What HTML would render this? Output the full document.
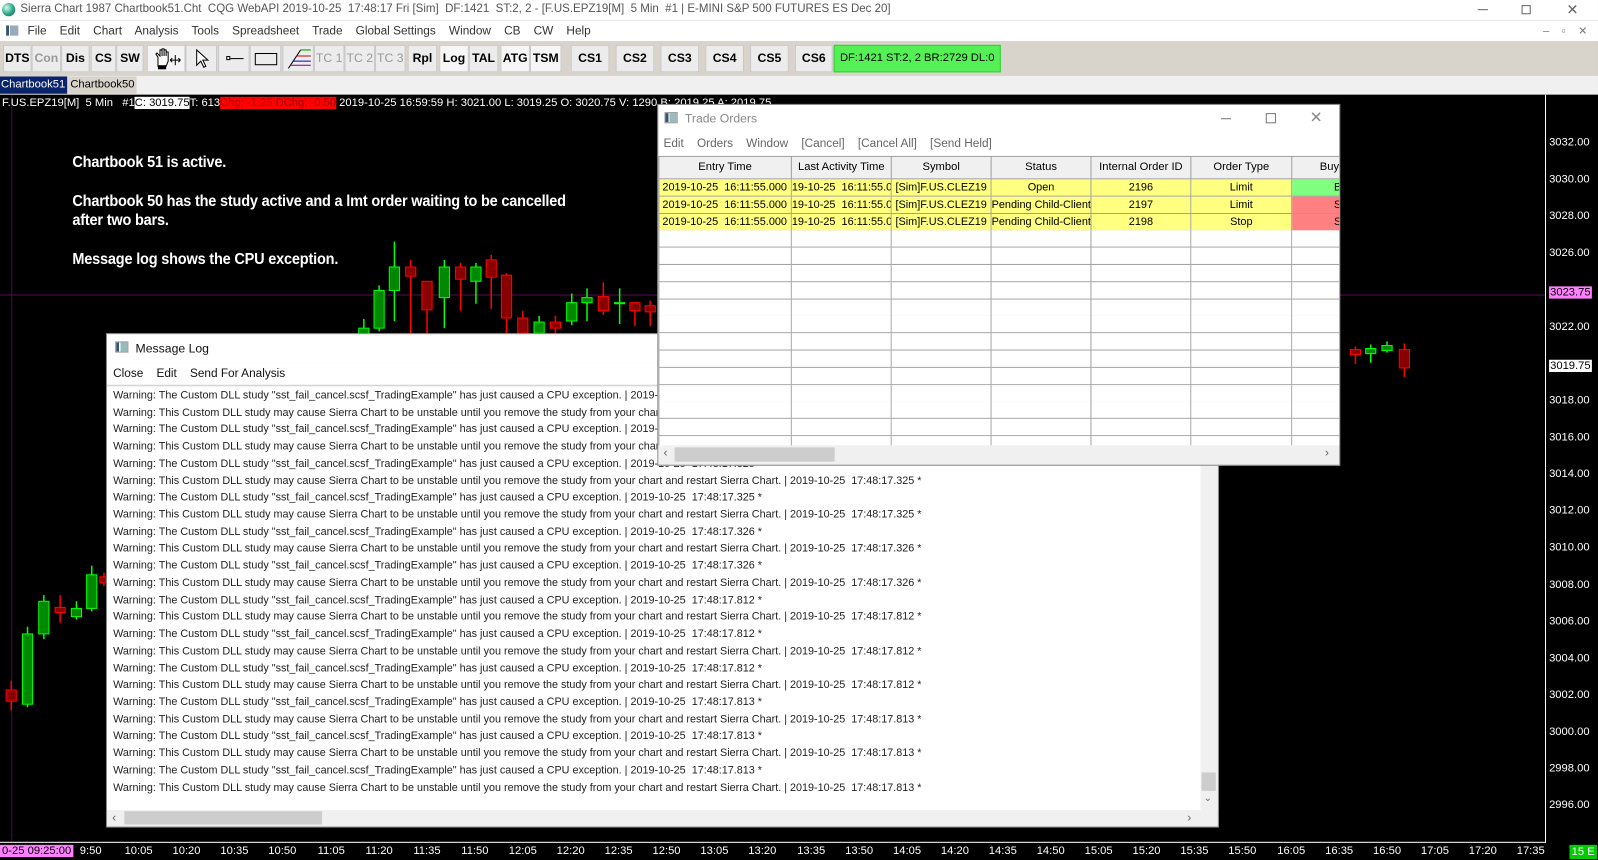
<!DOCTYPE html>
<html><head><meta charset="utf-8">
<style>
*{margin:0;padding:0;box-sizing:border-box}
html,body{width:1598px;height:860px;overflow:hidden;background:#000}
#w{position:absolute;left:0;top:0;width:1568px;height:844px;transform:scale(1.01913);transform-origin:0 0;font-family:"Liberation Sans",sans-serif;font-size:12px;background:#000;overflow:hidden}
.a{position:absolute;white-space:nowrap}
.btn{position:absolute;top:44px;height:27px;background:#ececec;border:1px solid #c8c8c8;font-weight:bold;font-size:12px;text-align:center;line-height:25px;color:#000}
.dis{color:#999}
.ax{position:absolute;left:1520px;color:#fff;font-size:11px}
.tl{position:absolute;top:829px;color:#fff;font-size:11px;transform:translateX(-50%)}
.log div{height:16.72px;line-height:16.7px;font-size:10.6px;color:#222;padding-left:6px;white-space:nowrap}
.gr{position:absolute;border-right:1px solid #a0a0a0;border-bottom:1px solid #a0a0a0;font-size:11px;text-align:center;white-space:nowrap;overflow:hidden}
</style></head><body><div id="w">
<div class="a" style="left:0;top:0;width:1568px;height:20px;background:#fff"></div>
<div class="a" style="left:2px;top:3px;width:13px;height:13px;border-radius:50%;background:radial-gradient(circle at 35% 35%,#cfe,#3a8 50%,#157)"></div>
<div class="a" style="left:20px;top:3px;color:#555;font-size:11.3px">Sierra Chart 1987 Chartbook51.Cht&nbsp; CQG WebAPI 2019-10-25&nbsp; 17:48:17 Fri [Sim]&nbsp; DF:1421&nbsp; ST:2, 2 - [F.US.EPZ19[M]&nbsp; 5 Min&nbsp; #1 | E-MINI S&amp;P 500 FUTURES ES Dec 20]</div>
<div class="a" style="left:1450px;top:9px;width:10px;height:1px;background:#666"></div>
<div class="a" style="left:1493px;top:5px;width:9px;height:9px;border:1px solid #666"></div>
<div class="a" style="left:1537px;top:1px;color:#666;font-size:14px">✕</div>
<div class="a" style="left:0;top:20px;width:1568px;height:21px;background:#fff"></div>
<div class="a" style="left:6px;top:25px;width:12px;height:10px;background:linear-gradient(90deg,#357 0 3px,#fff 3px 4px,#9ab 4px)"></div>
<div class="a" style="left:27px;top:24px;color:#333;font-size:11.6px">File&nbsp;&nbsp;&nbsp; Edit&nbsp;&nbsp;&nbsp; Chart&nbsp;&nbsp;&nbsp; Analysis&nbsp;&nbsp;&nbsp; Tools&nbsp;&nbsp;&nbsp; Spreadsheet&nbsp;&nbsp;&nbsp; Trade&nbsp;&nbsp;&nbsp; Global Settings&nbsp;&nbsp;&nbsp; Window&nbsp;&nbsp;&nbsp; CB&nbsp;&nbsp;&nbsp; CW&nbsp;&nbsp;&nbsp; Help</div>
<div class="a" style="left:1514px;top:24px;color:#777;font-size:11px">–&nbsp;&nbsp;&nbsp; ▫&nbsp;&nbsp;&nbsp; ✕</div>
<div class="a" style="left:0;top:41px;width:1568px;height:33px;background:#d8d4cc"></div>
<div class="btn" style="left:3px;width:28px">DTS</div>
<div class="btn dis" style="left:31px;width:29px">Con</div>
<div class="btn" style="left:60px;width:28px">Dis</div>
<div class="btn" style="left:89px;width:25px">CS</div>
<div class="btn" style="left:114px;width:27px">SW</div>
<div class="btn" style="left:144px;width:38px;background:#f4f4f4"><svg width="36" height="25"><path d="M10 20V11l-2-3 1-1 3 3V4h2v6V3h2v7V4h2v6V6h2v9l-2 5z" fill="#fff" stroke="#000"/><rect x="10" y="19" width="8" height="4" fill="#000"/><path d="M22 14h10M27 9v10M22 14l2-2M22 14l2 2M32 14l-2-2M32 14l-2 2" stroke="#000"/></svg></div>
<div class="btn" style="left:182px;width:31px"><svg width="29" height="25"><path d="M10 4v15l4-4 3 6 2-1-3-6h5z" fill="#fff" stroke="#000"/></svg></div>
<div class="btn" style="left:214px;width:31px"><div class="a" style="left:8px;top:12px;width:16px;height:1px;background:#000"></div><div class="a" style="left:7px;top:10px;width:4px;height:4px;border:1px solid #000;background:#fff"></div></div>
<div class="btn" style="left:245px;width:31px"><div class="a" style="left:4px;top:7px;width:22px;height:12px;border:1px solid #000"></div></div>
<div class="btn" style="left:277px;width:31px"><svg width="29" height="25"><path d="M5 22L17 4" stroke="#000"/><path d="M17 4h10" stroke="#0a0"/><path d="M13 10h14" stroke="#c00"/><path d="M10 15h17" stroke="#00c"/><path d="M7 19h20" stroke="#808"/></svg></div>
<div class="btn dis" style="left:308px;width:30px;font-weight:normal">TC 1</div>
<div class="btn dis" style="left:338px;width:30px;font-weight:normal">TC 2</div>
<div class="btn dis" style="left:368px;width:30px;font-weight:normal">TC 3</div>
<div class="btn" style="left:400px;width:29px">Rpl</div>
<div class="btn" style="left:431px;width:29px;background:#f6f6f6">Log</div>
<div class="btn" style="left:460px;width:29px">TAL</div>
<div class="btn" style="left:491px;width:29px;background:#f6f6f6">ATG</div>
<div class="btn" style="left:520px;width:31px;background:#f6f6f6">TSM</div>
<div class="btn" style="left:560px;width:38px">CS1</div>
<div class="btn" style="left:604px;width:38px">CS2</div>
<div class="btn" style="left:648px;width:38px">CS3</div>
<div class="btn" style="left:692px;width:38px">CS4</div>
<div class="btn" style="left:736px;width:38px">CS5</div>
<div class="btn" style="left:780px;width:37px">CS6</div>
<div class="btn" style="left:818px;width:164px;background:#55f055;border-color:#3c3;font-weight:normal;font-size:11px">DF:1421 ST:2, 2 BR:2729 DL:0</div>
<div class="a" style="left:0;top:74px;width:1568px;height:19px;background:#f0f0f0"></div>
<div class="a" style="left:0;top:75px;width:66px;height:17px;background:#0a246a;color:#fff;font-size:11px;line-height:17px;padding-left:1px">Chartbook51</div>
<div class="a" style="left:67px;top:75px;width:67px;height:17px;background:#d8d4cc;color:#000;font-size:11px;line-height:17px;padding-left:2px">Chartbook50</div>
<div class="a" style="left:0;top:93px;width:1568px;height:751px;background:#000"></div>
<div class="a" style="left:11px;top:93px;width:1px;height:733px;background:#4a0a4a"></div>
<div class="a" style="left:0;top:289px;width:1516px;height:1px;background:#5a0a5a"></div>
<div class="a" style="left:1516px;top:93px;width:1px;height:734px;background:#fff"></div>
<div class="a" style="left:0;top:826px;width:1517px;height:1px;background:#fff"></div>
<div class="a" style="left:2px;top:95px;font-size:11px;line-height:12px;color:#fff">F.US.EPZ19[M]&nbsp; 5 Min&nbsp;&nbsp; #1<span style="background:#fff;color:#000">C: 3019.75</span>T: 613<span style="background:#f00;color:#900">Chg: -1.25 DChg: -0.50</span> 2019-10-25 16:59:59 H: 3021.00 L: 3019.25 O: 3020.75 V: 1290 B: 2019.25 A: 2019.75</div>
<div class="a" style="left:71px;top:150px;color:#fff;font-weight:bold;font-size:15px;line-height:19px;transform:scaleX(0.95);transform-origin:0 0;letter-spacing:-0.2px">Chartbook 51 is active.<br><br>Chartbook 50 has the study active and a lmt order waiting to be cancelled<br>after two bars.<br><br>Message log shows the CPU exception.</div>
<svg class="a" style="left:0;top:0" width="1516" height="826">
<g stroke-width="1.5">
<path d="M357 313V330M372 280V325M387 237V315M436 255V322M467 258V298M529 310V327M561 288V319M576 283V315M608 283V318M27 615V694M43 584V627M75 590V608M90 555V600M1345 338V356M1361 335V346" stroke="#0f0"/>
<path d="M403 255V333M419 287V333M452 258V305M482 250V303M497 268V330M513 305V330M545 310V327M592 277V309M623 297V320M638 295V320M11 668V697M59 584V611M102 562V575M1330 340V357M1378 337V370" stroke="#f00"/>
</g>
<g stroke="#0f0" fill="#080"><rect x="352" y="322" width="10" height="8"/><rect x="367" y="285" width="10" height="37"/><rect x="382" y="262" width="10" height="23"/><rect x="431" y="262" width="10" height="30"/><rect x="462" y="262" width="10" height="14"/><rect x="524" y="316" width="10" height="11"/><rect x="556" y="297" width="10" height="18"/><rect x="571" y="292" width="10" height="5"/><rect x="603" y="297" width="10" height="1"/><rect x="22" y="622" width="10" height="69"/><rect x="38" y="590" width="10" height="32"/><rect x="70" y="597" width="10" height="8"/><rect x="85" y="564" width="10" height="33"/><rect x="1340" y="342" width="10" height="5"/><rect x="1356" y="339" width="10" height="5"/></g>
<g stroke="#f00" fill="#800"><rect x="398" y="262" width="10" height="9"/><rect x="414" y="276" width="10" height="28"/><rect x="447" y="262" width="10" height="12"/><rect x="477" y="255" width="10" height="17"/><rect x="492" y="270" width="10" height="42"/><rect x="508" y="312" width="10" height="15"/><rect x="540" y="316" width="10" height="6"/><rect x="587" y="291" width="10" height="14"/><rect x="618" y="297" width="10" height="8"/><rect x="633" y="300" width="10" height="6"/><rect x="6" y="677" width="10" height="11"/><rect x="54" y="596" width="10" height="5"/><rect x="98" y="566" width="6" height="6"/><rect x="1325" y="343" width="10" height="5"/><rect x="1373" y="343" width="10" height="18"/></g>
</svg>
<div class="ax" style="top:134px">3032.00</div><div class="ax" style="top:170px">3030.00</div><div class="ax" style="top:206px">3028.00</div><div class="ax" style="top:242px">3026.00</div>
<div class="ax" style="top:281px;background:#ff80ff;color:#000;padding:0 1px">3023.75</div>
<div class="ax" style="top:315px">3022.00</div>
<div class="ax" style="top:353px;background:#fff;color:#000;padding:0 1px">3019.75</div>
<div class="ax" style="top:387px">3018.00</div><div class="ax" style="top:423px">3016.00</div><div class="ax" style="top:459px">3014.00</div><div class="ax" style="top:495px">3012.00</div><div class="ax" style="top:531px">3010.00</div><div class="ax" style="top:568px">3008.00</div><div class="ax" style="top:604px">3006.00</div><div class="ax" style="top:640px">3004.00</div><div class="ax" style="top:676px">3002.00</div><div class="ax" style="top:712px">3000.00</div><div class="ax" style="top:748px">2998.00</div><div class="ax" style="top:784px">2996.00</div>
<div class="a" style="left:0;top:829px;background:#ff80ff;color:#000;font-size:11px;padding:0 2px">0-25 09:25:00</div>
<div class="tl" style="left:89px">9:50</div><div class="tl" style="left:136px">10:05</div><div class="tl" style="left:183px">10:20</div><div class="tl" style="left:230px">10:35</div><div class="tl" style="left:277px">10:50</div><div class="tl" style="left:325px">11:05</div><div class="tl" style="left:372px">11:20</div><div class="tl" style="left:419px">11:35</div><div class="tl" style="left:466px">11:50</div><div class="tl" style="left:513px">12:05</div><div class="tl" style="left:560px">12:20</div><div class="tl" style="left:607px">12:35</div><div class="tl" style="left:654px">12:50</div><div class="tl" style="left:701px">13:05</div><div class="tl" style="left:748px">13:20</div><div class="tl" style="left:796px">13:35</div><div class="tl" style="left:843px">13:50</div><div class="tl" style="left:890px">14:05</div><div class="tl" style="left:937px">14:20</div><div class="tl" style="left:984px">14:35</div><div class="tl" style="left:1031px">14:50</div><div class="tl" style="left:1078px">15:05</div><div class="tl" style="left:1125px">15:20</div><div class="tl" style="left:1172px">15:35</div><div class="tl" style="left:1219px">15:50</div><div class="tl" style="left:1267px">16:05</div><div class="tl" style="left:1314px">16:35</div><div class="tl" style="left:1361px">16:50</div><div class="tl" style="left:1408px">17:05</div><div class="tl" style="left:1455px">17:20</div><div class="tl" style="left:1502px">17:35</div>
<div class="a" style="left:1540px;top:829px;width:27px;height:14px;background:#0c0;color:#fff;font-size:11px;text-align:center;line-height:14px">15 E</div>

<div class="a" style="left:104px;top:327px;width:1092px;height:485px;background:#f0f0f0;border:1px solid #888"></div>
<div class="a" style="left:105px;top:328px;width:1090px;height:28px;background:#fff"></div>
<div class="a" style="left:113px;top:335px;width:13px;height:11px;background:linear-gradient(90deg,#357 0 3px,#fff 3px 4px,#9bb 4px);border:1px solid #999"></div>
<div class="a" style="left:133px;top:335px;font-size:12px;color:#111">Message Log</div>
<div class="a" style="left:105px;top:356px;width:1090px;height:21px;background:#fff"></div>
<div class="a" style="left:111px;top:360px;font-size:11.6px;color:#111">Close&nbsp;&nbsp;&nbsp; Edit&nbsp;&nbsp;&nbsp; Send For Analysis</div>
<div class="a log" style="left:105px;top:378px;width:1073px;height:417px;background:#fff;border-top:1px solid #ccc;overflow:hidden;padding-top:1px">
<div>Warning: The Custom DLL study "sst_fail_cancel.scsf_TradingExample" has just caused a CPU exception. | 2019-10-25&nbsp; 17:48:17.325 *</div>
<div>Warning: This Custom DLL study may cause Sierra Chart to be unstable until you remove the study from your chart and restart Sierra Chart. | 2019-10-25&nbsp; 17:48:17.325 *</div>
<div>Warning: The Custom DLL study "sst_fail_cancel.scsf_TradingExample" has just caused a CPU exception. | 2019-10-25&nbsp; 17:48:17.325 *</div>
<div>Warning: This Custom DLL study may cause Sierra Chart to be unstable until you remove the study from your chart and restart Sierra Chart. | 2019-10-25&nbsp; 17:48:17.325 *</div>
<div>Warning: The Custom DLL study "sst_fail_cancel.scsf_TradingExample" has just caused a CPU exception. | 2019-10-25&nbsp; 17:48:17.325 *</div>
<div>Warning: This Custom DLL study may cause Sierra Chart to be unstable until you remove the study from your chart and restart Sierra Chart. | 2019-10-25&nbsp; 17:48:17.325 *</div>
<div>Warning: The Custom DLL study "sst_fail_cancel.scsf_TradingExample" has just caused a CPU exception. | 2019-10-25&nbsp; 17:48:17.325 *</div>
<div>Warning: This Custom DLL study may cause Sierra Chart to be unstable until you remove the study from your chart and restart Sierra Chart. | 2019-10-25&nbsp; 17:48:17.325 *</div>
<div>Warning: The Custom DLL study "sst_fail_cancel.scsf_TradingExample" has just caused a CPU exception. | 2019-10-25&nbsp; 17:48:17.326 *</div>
<div>Warning: This Custom DLL study may cause Sierra Chart to be unstable until you remove the study from your chart and restart Sierra Chart. | 2019-10-25&nbsp; 17:48:17.326 *</div>
<div>Warning: The Custom DLL study "sst_fail_cancel.scsf_TradingExample" has just caused a CPU exception. | 2019-10-25&nbsp; 17:48:17.326 *</div>
<div>Warning: This Custom DLL study may cause Sierra Chart to be unstable until you remove the study from your chart and restart Sierra Chart. | 2019-10-25&nbsp; 17:48:17.326 *</div>
<div>Warning: The Custom DLL study "sst_fail_cancel.scsf_TradingExample" has just caused a CPU exception. | 2019-10-25&nbsp; 17:48:17.812 *</div>
<div>Warning: This Custom DLL study may cause Sierra Chart to be unstable until you remove the study from your chart and restart Sierra Chart. | 2019-10-25&nbsp; 17:48:17.812 *</div>
<div>Warning: The Custom DLL study "sst_fail_cancel.scsf_TradingExample" has just caused a CPU exception. | 2019-10-25&nbsp; 17:48:17.812 *</div>
<div>Warning: This Custom DLL study may cause Sierra Chart to be unstable until you remove the study from your chart and restart Sierra Chart. | 2019-10-25&nbsp; 17:48:17.812 *</div>
<div>Warning: The Custom DLL study "sst_fail_cancel.scsf_TradingExample" has just caused a CPU exception. | 2019-10-25&nbsp; 17:48:17.812 *</div>
<div>Warning: This Custom DLL study may cause Sierra Chart to be unstable until you remove the study from your chart and restart Sierra Chart. | 2019-10-25&nbsp; 17:48:17.812 *</div>
<div>Warning: The Custom DLL study "sst_fail_cancel.scsf_TradingExample" has just caused a CPU exception. | 2019-10-25&nbsp; 17:48:17.813 *</div>
<div>Warning: This Custom DLL study may cause Sierra Chart to be unstable until you remove the study from your chart and restart Sierra Chart. | 2019-10-25&nbsp; 17:48:17.813 *</div>
<div>Warning: The Custom DLL study "sst_fail_cancel.scsf_TradingExample" has just caused a CPU exception. | 2019-10-25&nbsp; 17:48:17.813 *</div>
<div>Warning: This Custom DLL study may cause Sierra Chart to be unstable until you remove the study from your chart and restart Sierra Chart. | 2019-10-25&nbsp; 17:48:17.813 *</div>
<div>Warning: The Custom DLL study "sst_fail_cancel.scsf_TradingExample" has just caused a CPU exception. | 2019-10-25&nbsp; 17:48:17.813 *</div>
<div>Warning: This Custom DLL study may cause Sierra Chart to be unstable until you remove the study from your chart and restart Sierra Chart. | 2019-10-25&nbsp; 17:48:17.813 *</div>
</div>
<div class="a" style="left:1178px;top:378px;width:17px;height:417px;background:#f0f0f0"></div>
<div class="a" style="left:1179px;top:758px;width:14px;height:18px;background:#cdcdcd"></div>
<div class="a" style="left:1181px;top:778px;color:#666;font-size:10px">⌄</div>
<div class="a" style="left:105px;top:795px;width:1073px;height:16px;background:#f0f0f0"></div>
<div class="a" style="left:122px;top:796px;width:194px;height:13px;background:#cdcdcd"></div>
<div class="a" style="left:110px;top:795px;color:#666;font-size:12px">‹</div>
<div class="a" style="left:1165px;top:795px;color:#666;font-size:12px">›</div>

<div class="a" style="left:645px;top:102px;width:670px;height:355px;background:#f0f0f0;border:1px solid #888"></div>
<div class="a" style="left:646px;top:103px;width:668px;height:50px;background:#fff"></div>
<div class="a" style="left:652px;top:110px;width:13px;height:11px;background:linear-gradient(90deg,#357 0 3px,#fff 3px 4px,#9bb 4px);border:1px solid #999"></div>
<div class="a" style="left:672px;top:109px;font-size:12px;color:#888">Trade Orders</div>
<div class="a" style="left:1198px;top:116px;width:10px;height:1px;background:#777"></div>
<div class="a" style="left:1242px;top:111px;width:10px;height:10px;border:1px solid #777"></div>
<div class="a" style="left:1285px;top:106px;color:#888;font-size:15px">✕</div>
<div class="a" style="left:651px;top:134px;font-size:11.6px;color:#666">Edit&nbsp;&nbsp;&nbsp; Orders&nbsp;&nbsp;&nbsp; Window&nbsp;&nbsp;&nbsp; [Cancel]&nbsp;&nbsp;&nbsp; [Cancel All]&nbsp;&nbsp;&nbsp; [Send Held]</div>
<div class="a" style="left:646px;top:153px;width:668px;height:284px;background:#fff;border-top:1px solid #a0a0a0;overflow:hidden">
<div style="position:absolute;left:0;top:0;width:670px;height:23px;background:#f0f0f0;border-bottom:1px solid #a0a0a0"></div>
</div>
<div class="a" id="grid" style="left:646px;top:153px;width:668px;height:284px;overflow:hidden">
<div class="gr" style="left:0;top:0;width:131px;height:23px;line-height:22px;border-left:1px solid #a0a0a0">Entry Time</div>
<div class="gr" style="left:131px;top:0;width:98px;height:23px;line-height:22px">Last Activity Time</div>
<div class="gr" style="left:229px;top:0;width:98px;height:23px;line-height:22px">Symbol</div>
<div class="gr" style="left:327px;top:0;width:98px;height:23px;line-height:22px">Status</div>
<div class="gr" style="left:425px;top:0;width:98px;height:23px;line-height:22px">Internal Order ID</div>
<div class="gr" style="left:523px;top:0;width:99px;height:23px;line-height:22px">Order Type</div>
<div class="gr" style="left:622px;top:0;width:60px;height:23px;line-height:22px;text-align:left;padding-left:27px">Buy</div>
</div>
<div class="a" style="left:646px;top:437px;width:668px;height:18px;background:#f0f0f0"></div>
<div class="a" style="left:662px;top:439px;width:157px;height:14px;background:#cdcdcd"></div>
<div class="a" style="left:651px;top:437px;color:#666;font-size:12px">‹</div>
<div class="a" style="left:1300px;top:437px;color:#666;font-size:12px">›</div>
<script>
(function(){var g=document.getElementById('grid'),h='';
var L=[0,131,229,327,425,523,622],W=[131,98,98,98,98,99,60];
var rows=[["2019-10-25&nbsp; 16:11:55.000","19-10-25&nbsp; 16:11:55.000","[Sim]F.US.CLEZ19","Open","2196","Limit","B","#80ff80"],
["2019-10-25&nbsp; 16:11:55.000","19-10-25&nbsp; 16:11:55.000","[Sim]F.US.CLEZ19","Pending Child-Client","2197","Limit","S","#ff8080"],
["2019-10-25&nbsp; 16:11:55.000","19-10-25&nbsp; 16:11:55.000","[Sim]F.US.CLEZ19","Pending Child-Client","2198","Stop","S","#ff8080"]];
for(var r=0;r<16;r++){var y=Math.round(23+r*16.8);for(var c=0;c<7;c++){var t='',bg='#fff',al='center';
if(r<3){t=rows[r][c]||'';bg=c==6?rows[r][7]:'#ffff80';if(c<2)al='left';if(c==6){t=rows[r][6];al='left'}}
h+='<div class="gr" style="left:'+L[c]+'px;top:'+y+'px;width:'+W[c]+'px;height:17px;line-height:16px;font-size:10.7px;background:'+bg+';text-align:'+al+';'+(c==0?'border-left:1px solid #a0a0a0;padding-left:3px;':'')+(c==6?'padding-left:41px;':'')+'">'+t+'</div>';}}
g.innerHTML+=h;})();
</script>
</div></body></html>
